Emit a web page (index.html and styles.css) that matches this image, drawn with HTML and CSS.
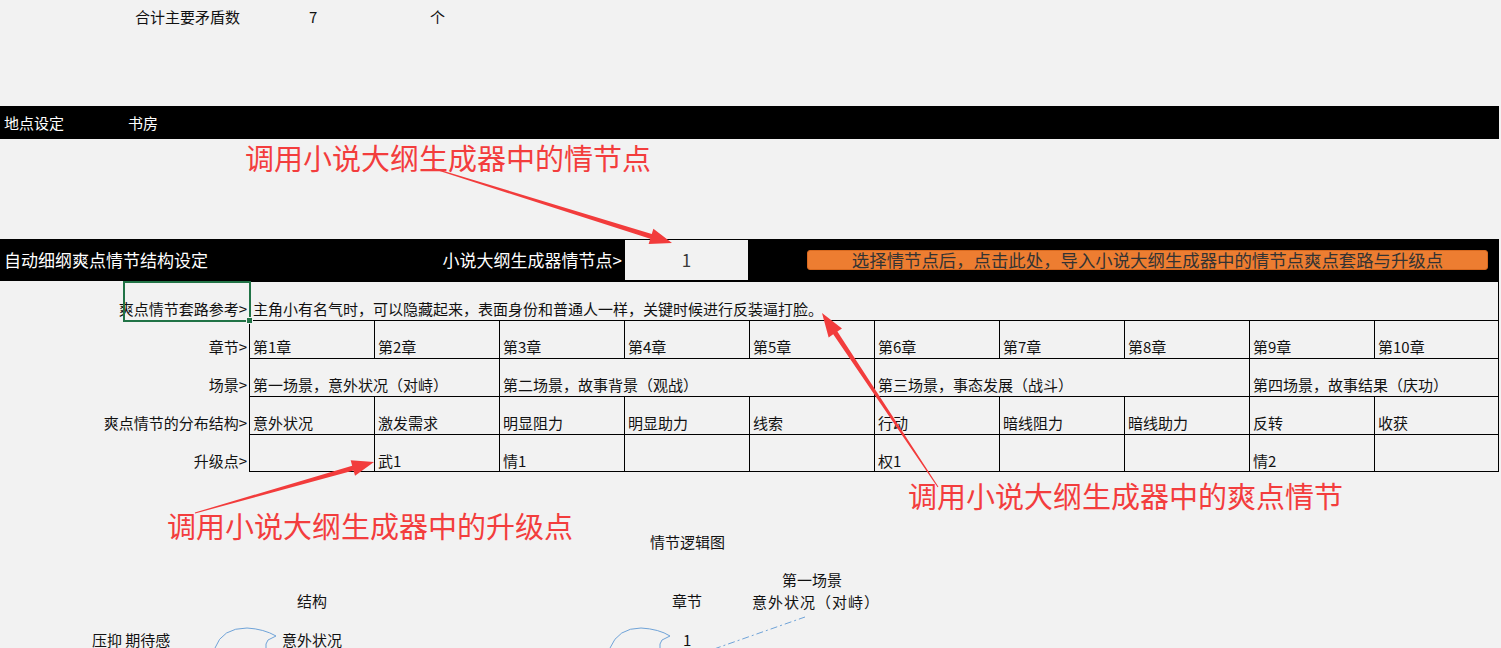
FILE: index.html
```html
<!DOCTYPE html>
<html lang="zh-CN">
<head>
<meta charset="utf-8">
<title>自动细纲爽点情节结构设定</title>
<link rel="stylesheet" href="styles.css">
</head>
<body>
<div class="sheet">
  <div class="summary">
    <span class="sum-label">合计主要矛盾数</span>
    <span class="sum-val">7</span>
    <span class="sum-unit">个</span>
  </div>

  <div class="bar place-bar">
    <span class="place-label">地点设定</span>
    <span class="place-val">书房</span>
  </div>

  <div class="gap-area"></div>

  <div class="bar plot-bar">
    <span class="plot-title">自动细纲爽点情节结构设定</span>
    <span class="plot-label">小说大纲生成器情节点&gt;</span>
    <span class="plot-input">1</span>
    <span class="plot-button">选择情节点后，点击此处，导入小说大纲生成器中的情节点爽点套路与升级点</span>
  </div>

  <div class="grid">
    <div class="lbl">爽点情节套路参考&gt;<span class="sel"></span></div>
    <div class="cell span10 last">主角小有名气时，可以隐藏起来，表面身份和普通人一样，关键时候进行反装逼打脸。</div>

    <div class="lbl">章节&gt;</div>
    <div class="cell">第1章</div>
    <div class="cell">第2章</div>
    <div class="cell">第3章</div>
    <div class="cell">第4章</div>
    <div class="cell">第5章</div>
    <div class="cell">第6章</div>
    <div class="cell">第7章</div>
    <div class="cell">第8章</div>
    <div class="cell">第9章</div>
    <div class="cell last">第10章</div>

    <div class="lbl">场景&gt;</div>
    <div class="cell span2">第一场景，意外状况（对峙）</div>
    <div class="cell span3">第二场景，故事背景（观战）</div>
    <div class="cell span3">第三场景，事态发展（战斗）</div>
    <div class="cell span2 last">第四场景，故事结果（庆功）</div>

    <div class="lbl">爽点情节的分布结构&gt;</div>
    <div class="cell">意外状况</div>
    <div class="cell">激发需求</div>
    <div class="cell">明显阻力</div>
    <div class="cell">明显助力</div>
    <div class="cell">线索</div>
    <div class="cell">行动</div>
    <div class="cell">暗线阻力</div>
    <div class="cell">暗线助力</div>
    <div class="cell">反转</div>
    <div class="cell last">收获</div>

    <div class="lbl">升级点&gt;</div>
    <div class="cell bottom"></div>
    <div class="cell bottom">武1</div>
    <div class="cell bottom">情1</div>
    <div class="cell bottom"></div>
    <div class="cell bottom"></div>
    <div class="cell bottom">权1</div>
    <div class="cell bottom"></div>
    <div class="cell bottom"></div>
    <div class="cell bottom">情2</div>
    <div class="cell bottom last"></div>
  </div>

  <div class="diagram">
    <span class="node n-title">情节逻辑图</span>
    <span class="node n-struct">结构</span>
    <span class="node n-chapter">章节</span>
    <span class="node n-scene1">第一场景</span>
    <span class="node n-scene2">意外状况（对峙）</span>
    <span class="node low n-mood">压抑 期待感</span>
    <span class="node low n-event">意外状况</span>
    <span class="node low n-num">1</span>
  </div>

  <span class="anno anno-1">调用小说大纲生成器中的情节点</span>
  <span class="anno anno-2">调用小说大纲生成器中的升级点</span>
  <span class="anno anno-3">调用小说大纲生成器中的爽点情节</span>

  <svg class="overlay" width="1501" height="648" viewBox="0 0 1501 648">
    <g class="blue">
      <path d="M215 648 Q222 628 247 628 Q264 629 276 636 L268 640 Q265 644 266 648"/>
      <path d="M610 648 Q618 628 641 628 Q659 629 670 636 L662 640 Q659 644 660 648"/>
      <path class="dashdot" d="M714 649 L805 617"/>
    </g>
    <g class="red">
      <polygon points="431.85,168.48 650.25,238.83 648.61,244.08 672,243 653.39,228.80 651.75,234.05 432.15,167.52"/>
      <polygon points="938.42,486.72 837.39,331.58 841.97,328.53 822,313 828.65,337.41 833.23,334.36 937.58,487.28"/>
      <polygon points="195.14,513.48 353.53,470.43 355.03,475.72 374,462 350.65,460.34 352.16,465.63 194.86,512.52"/>
    </g>
  </svg>
</div>
</body>
</html>
```

FILE: styles.css
```css
html, body {
  margin: 0;
  padding: 0;
}
body {
  background: #f2f2f2;
  font-family: "Noto Sans CJK SC", "Microsoft YaHei", sans-serif;
  font-size: 15px;
  color: #000;
  overflow: hidden;
}
.sheet {
  position: relative;
  width: 1501px;
  height: 648px;
  overflow: hidden;
}

/* top summary */
.summary {
  display: flex;
  height: 106px;
  box-sizing: border-box;
  padding-top: 7px;
  line-height: 20px;
  color: #111;
}
.sum-label {
  width: 309px;
  padding-left: 135px;
  box-sizing: border-box;
}
.sum-val {
  width: 121px;
}

/* black bars */
.bar {
  width: 1499px;
  background: #000;
  color: #fff;
  display: flex;
  align-items: center;
  white-space: nowrap;
}
.place-bar {
  height: 33px;
  line-height: 20px;
}
.place-label {
  width: 128px;
  padding-left: 4px;
  box-sizing: border-box;
}
.gap-area {
  height: 100px;
}
.plot-bar {
  height: 42px;
  font-size: 17px;
  line-height: 22px;
}
.plot-title {
  width: 436px;
  padding-left: 4px;
  box-sizing: border-box;
}
.plot-label {
  width: 186px;
  text-align: right;
}
.plot-input {
  margin-left: 3px;
  width: 123px;
  height: 40px;
  background: #f2f2f2;
  color: #3a3a3a;
  display: flex;
  align-items: center;
  justify-content: center;
}
.plot-button {
  margin-left: 59px;
  width: 681px;
  height: 20px;
  box-sizing: border-box;
  background: #ed7d31;
  border: 1px solid #d8691f;
  border-radius: 3px;
  color: #333;
  display: flex;
  align-items: center;
  justify-content: center;
  font-size: 17.4px;
  line-height: 18px;
}

/* table */
.grid {
  display: grid;
  grid-template-columns: 249px repeat(10, 125px);
  grid-template-rows: 39px repeat(4, 38px);
  width: 1499px;
}
.lbl {
  position: relative;
  display: flex;
  align-items: flex-end;
  justify-content: flex-end;
  padding: 0 2px 1px 0;
  line-height: 20px;
  white-space: nowrap;
  color: #111;
}
.cell {
  display: flex;
  align-items: flex-end;
  box-sizing: border-box;
  border-left: 1px solid #000;
  border-top: 1px solid #000;
  padding: 0 0 1px 3px;
  line-height: 20px;
  white-space: nowrap;
  overflow: hidden;
  color: #111;
}
.cell.last {
  border-right: 1px solid #000;
}
.cell.bottom {
  border-bottom: 1px solid #000;
  padding-bottom: 0;
}
.span10 { grid-column: span 10; }
.span3 { grid-column: span 3; }
.span2 { grid-column: span 2; }

.sel {
  position: absolute;
  left: 123px;
  top: 0;
  width: 128px;
  height: 41px;
  box-sizing: border-box;
  border: 2px solid #217346;
}
.sel::after {
  content: "";
  position: absolute;
  right: -4px;
  bottom: -4px;
  width: 5px;
  height: 5px;
  background: #217346;
  border: 1px solid #f2f2f2;
}

/* logic diagram */
.diagram {
  position: relative;
  height: 176px;
}
.node {
  position: absolute;
  line-height: 20px;
  white-space: nowrap;
  color: #111;
}
.node.low {
  line-height: 16px;
  top: 160px;
}
.n-title { left: 650px; top: 60px; }
.n-struct { left: 297px; top: 119px; }
.n-chapter { left: 672px; top: 119px; }
.n-scene1 { left: 782px; top: 98px; }
.n-scene2 { left: 752px; top: 120px; letter-spacing: 1px; }
.n-mood { left: 92px; }
.n-event { left: 282px; }
.n-num { left: 683px; }

/* annotations */
.anno {
  position: absolute;
  color: #f33d3d;
  font-size: 29px;
  line-height: 34px;
  white-space: nowrap;
}
.anno-1 { left: 245px; top: 140px; }
.anno-2 { left: 167px; top: 508px; }
.anno-3 { left: 908px; top: 478px; }

.overlay {
  position: absolute;
  left: 0;
  top: 0;
  pointer-events: none;
}
.blue path {
  fill: none;
  stroke: #6fa3d8;
  stroke-width: 1;
}
.blue .dashdot {
  stroke-dasharray: 7 3 2 3;
}
.red polygon {
  fill: #f23c3c;
}
```
